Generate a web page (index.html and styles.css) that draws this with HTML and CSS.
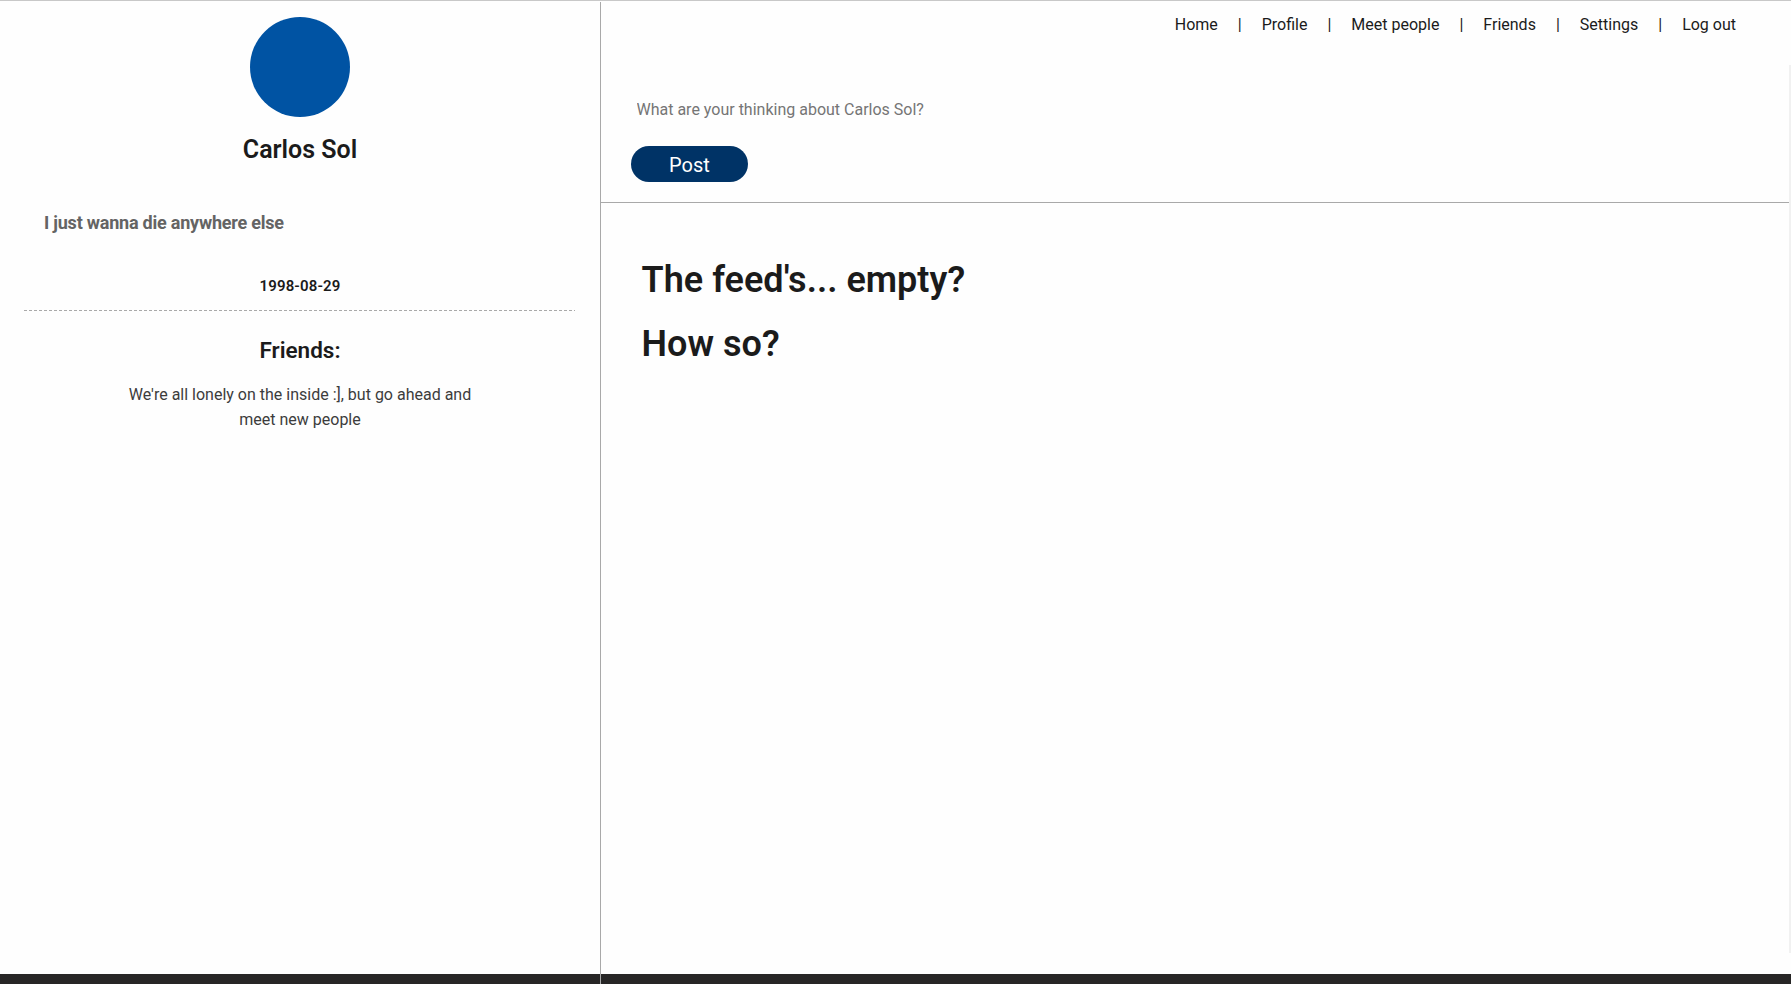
FILE: index.html
```html
<!DOCTYPE html>
<html lang="en">
<head>
<meta charset="utf-8">
<title>Feed</title>
<link rel="stylesheet" href="styles.css">
</head>
<body>
<div class="app">
  <aside class="sidebar">
    <div class="avatar"></div>
    <h2 class="name"><span>Carlos Sol</span></h2>
    <p class="bio"><span>I just wanna die anywhere else</span></p>
    <p class="birthday"><span>1998-08-29</span></p>
    <svg class="divider" width="551" height="1"><line x1="0" y1="0.5" x2="551" y2="0.5"/></svg>
    <h3 class="friends-title"><span>Friends:</span></h3>
    <p class="friends-empty">We're all lonely on the inside :], but go ahead and<br>meet new people</p>
  </aside>
  <main class="main">
    <nav class="nav">
      <a>Home</a><i>|</i><a>Profile</a><i>|</i><a>Meet people</a><i>|</i><a>Friends</a><i>|</i><a>Settings</a><i>|</i><a>Log out</a>
    </nav>
    <div class="content">
      <div class="column">
        <form class="composer">
          <input class="thought" type="text" placeholder="What are your thinking about Carlos Sol?">
          <button class="post" type="button">Post</button>
        </form>
        <section class="feed">
          <h1>The feed's... empty?</h1>
          <h1>How so?</h1>
        </section>
      </div>
      <div class="track"></div>
    </div>
  </main>
</div>
</body>
</html>
```
FILE: styles.css
```css
* { box-sizing: border-box; margin: 0; padding: 0; }
body {
  height: 984px;
  overflow: hidden;
  font-family: Roboto, sans-serif;
  color: #1b1b1b;
  background: linear-gradient(#fefefe 974px, #272626 974px);
}
.app {
  display: flex;
  height: 984px;
  padding-top: 1px;
  border-top: 1px solid #c8c8c8;
}
.sidebar {
  display: flex;
  flex-direction: column;
  align-items: center;
  width: 601px;
  padding-top: 15px;
  border-right: 1px solid #a9a9a9;
}
.avatar {
  width: 100px;
  height: 100px;
  border-radius: 50%;
  background: #0053a3;
}
.name { margin-top: 18px; font-size: 25px; line-height: 30px; font-weight: 600; }
.bio { align-self: flex-start; margin: 46px 0 0 44px; font-size: 18px; line-height: 24px; font-weight: 700; color: #646464; letter-spacing: -0.22px; }
.birthday { margin-top: 41px; font-size: 15px; line-height: 20px; font-weight: 600; letter-spacing: 0.15px; }
.divider { display: block; align-self: flex-start; margin: 14px 0 0 24px; stroke: #a9a9a9; stroke-dasharray: 3 2; }
.friends-title { margin-top: 24px; font-size: 22.5px; line-height: 30px; font-weight: 600; }
.friends-empty { margin-top: 17px; font-size: 16px; line-height: 25px; font-weight: 400; color: #3c3c3c; text-align: center; }
.main { display: flex; flex: 1; flex-direction: column; }
.nav {
  display: flex;
  justify-content: flex-end;
  gap: 20px;
  height: 63px;
  padding: 11px 55px 0 0;
  font-size: 16px;
  line-height: 24px;
}
.nav i { font-style: normal; }
.content { display: flex; height: 888px; }
.column { flex: 1; }
.track { width: 2px; background: #f1f1f1; }
.composer { display: flex; flex-direction: column; height: 138px; padding: 33px 30px 0; border-bottom: 1px solid #a9a9a9; }
.thought {
  height: 24px;
  padding-left: 5.5px;
  border: 0;
  outline: 0;
  font: 16px/24px Roboto, sans-serif;
  background: transparent;
}
.thought::placeholder { color: #757575; }
.post {
  width: 117px;
  height: 36px;
  margin-top: 24px;
  padding-top: 2px;
  border: 0;
  border-radius: 18px;
  font: 20px/34px Roboto, sans-serif;
  color: #fff;
  background: #003366;
}
.feed { padding: 45px 40.5px; }
.feed h1 { font-size: 36px; line-height: 64px; font-weight: 600; letter-spacing: 0.03px; }
```
